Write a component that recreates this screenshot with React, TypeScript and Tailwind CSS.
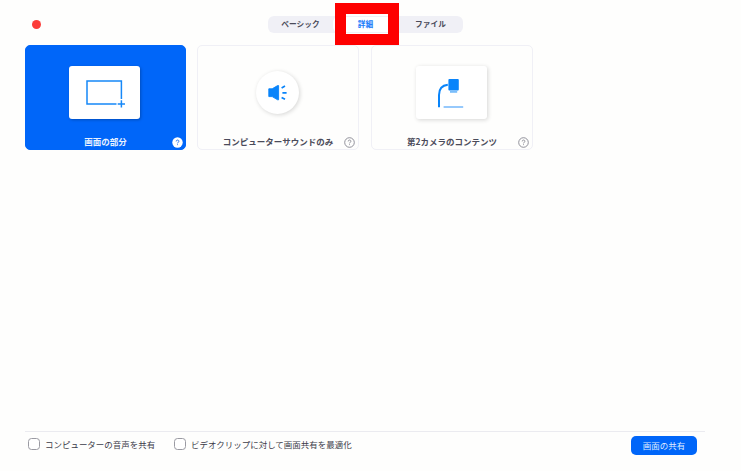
import type { ReactNode } from 'react';

function Help({ selected = false }: { selected?: boolean }) {
  return (
    <svg className={`absolute bottom-px h-[11px] w-[11px] ${selected ? 'right-[2px]' : 'right-[3px]'}`} viewBox="0 0 11 11" fill="none">
      <circle cx="5.5" cy="5.5" r={selected ? 5.2 : 4.8} fill={selected ? '#fff' : 'none'} stroke={selected ? 'none' : '#85858f'} strokeWidth="0.9" />
      <path d="M4.2 4.4C4.2 2.6 6.9 2.6 6.9 4.3C6.9 5.3 5.5 5.3 5.5 6.4M5.5 7.3V8.1" stroke={selected ? '#1768e8' : '#85858f'} strokeWidth="0.9" />
    </svg>
  );
}

function Card({ label, selected = false, children }: { label: string; selected?: boolean; children: ReactNode }) {
  return (
    <div
      className={`relative flex h-[105px] flex-col items-center rounded-[5px] border ${
        selected ? 'w-[161px] border-[#0066f9] bg-[#0066f9] text-[#e8f1ff]' : 'w-[162px] border-[#f0f0f6] text-[#4b4b5a]'
      }`}
    >
      <div className="mr-[2px] flex h-[92px] shrink-0 items-center justify-center">{children}</div>
      <div className="-mt-[3px] text-[8.5px] leading-[12px] font-bold whitespace-nowrap">{label}</div>
      <Help selected={selected} />
    </div>
  );
}

function Option({ label }: { label: string }) {
  return (
    <label className="flex items-center gap-[5px]">
      <span className="h-[12px] w-[12px] rounded-[3.5px] border border-[#9a9aa2] bg-white" />
      <span className="-mt-px text-[8.47px] leading-[12px] whitespace-nowrap text-[#3c3c49]">{label}</span>
    </label>
  );
}

export default function App() {
  return (
    <div className="relative flex h-[471px] w-[741px] flex-col overflow-hidden bg-[#fefefd] font-['Noto_Sans_CJK_JP','Liberation_Sans',sans-serif]">
      <header className="flex h-[45px] shrink-0 items-start pt-[15px] pl-[32px]">
        <span className="mt-[5px] h-[9px] w-[9px] rounded-full bg-[#fc3d39]" />
        <nav className="mt-px ml-[227px] flex h-[17px] w-[195px] items-center rounded-[6px] bg-[#f0f0f6] text-[7.7px] leading-[12px] font-bold text-[#4b4b5a]">
          <span className="-mt-px w-[65px] text-center">ベーシック</span>
          <span className="h-[15px] w-[65px] rounded-[5px] bg-white text-center leading-[14px] text-[#1479fa]">詳細</span>
          <span className="-mt-px w-[65px] text-center">ファイル</span>
        </nav>
      </header>

      <main className="flex grow items-start pl-[25px]">
        <Card label="画面の部分" selected>
          <div className="flex h-[53px] w-[71px] items-center justify-center rounded-[3px] bg-white shadow-[1px_1px_3px_rgba(0,0,0,0.25)]">
            <svg className="h-[53px] w-[71px]" viewBox="0 0 71 53" fill="none">
              <path d="M47.5 38H18V14.9H52.4V33M52.4 34.2V41.6M48.7 38H56" stroke="#1688f8" strokeWidth="1.5" />
            </svg>
          </div>
        </Card>
        <div className="ml-[11px]">
          <Card label="コンピューターサウンドのみ">
            <div className="flex h-[43px] w-[43px] items-center justify-center rounded-full bg-white shadow-[1px_1px_4px_rgba(0,0,0,0.16)]">
              <svg className="h-[43px] w-[43px]" viewBox="0 0 43 43" fill="none">
                <path d="M12.8 17.8H16.2L21.6 14.6H22.6V28.8H21.6L16.2 25.6H12.8Z" fill="#0984fa" stroke="#0984fa" strokeWidth="0.9" strokeLinejoin="round" />
                <path d="M25.6 17L29 15.1M26.4 21.8H30.6M25.6 26.4L29 28.3" stroke="#0984fa" strokeWidth="1.7" />
              </svg>
            </div>
          </Card>
        </div>
        <div className="ml-[12px]">
          <Card label="第2カメラのコンテンツ">
            <div className="flex h-[53px] w-[71px] items-center justify-center rounded-[3px] bg-white shadow-[1px_1px_4px_rgba(0,0,0,0.16)]">
              <svg className="h-[53px] w-[71px]" viewBox="0 0 71 53" fill="none">
                <path d="M23 41.2V29C23 22.5 26 19.4 31.8 18.8" stroke="#0984fa" strokeWidth="2" />
                <rect x="32.4" y="13.1" width="10.4" height="11.4" rx="1" fill="#0984fa" />
                <rect x="34" y="24.8" width="7.2" height="2" fill="#79bdfb" />
                <path d="M27.6 41H47.2" stroke="#8bc3fc" strokeWidth="1.8" />
              </svg>
            </div>
          </Card>
        </div>
      </main>

      <footer className="mr-[36px] ml-[25px] flex h-[40px] shrink-0 items-start border-t border-[#ebebf0] pt-[4px] pl-[3px]">
        <div className="mt-[2px] flex gap-[19px]">
          <Option label="コンピューターの音声を共有" />
          <Option label="ビデオクリップに対して画面共有を最適化" />
        </div>
        <button className="mr-[8px] ml-auto h-[19px] w-[66px] rounded-[5px] bg-[#0066f9] text-[8.5px] leading-[19px] text-[#dfeaff]">画面の共有</button>
      </footer>

      <div className="absolute top-[3px] left-[335px] h-[42px] w-[64px] border-[11px] border-[#fe0000]" />
    </div>
  );
}
